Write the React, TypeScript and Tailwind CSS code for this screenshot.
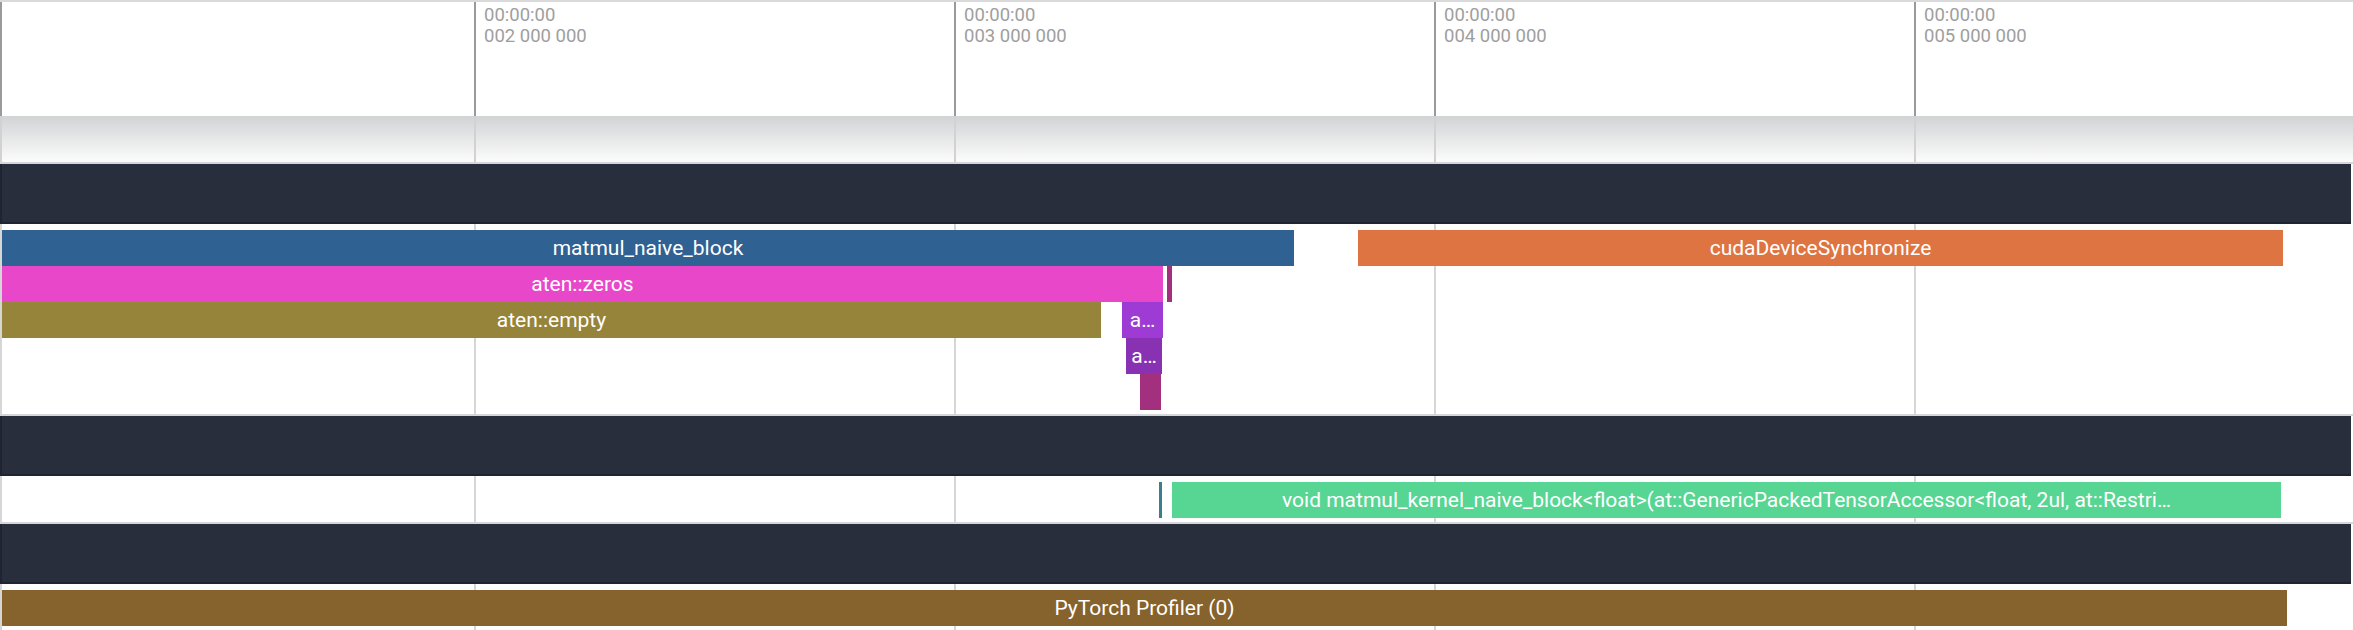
import React from "react";

type Bar = { l: number; r: number; color: string; text?: string };

const TICKS = [0, 474, 954, 1434, 1914];
const LABELS = [
  { x: 474, a: "00:00:00", b: "002 000 000" },
  { x: 954, a: "00:00:00", b: "003 000 000" },
  { x: 1434, a: "00:00:00", b: "004 000 000" },
  { x: 1914, a: "00:00:00", b: "005 000 000" },
];

const TRACK1: Bar[][] = [
  [
    { l: 2, r: 1294, color: "#2f6192", text: "matmul_naive_block" },
    { l: 1358, r: 2283, color: "#dd7441", text: "cudaDeviceSynchronize" },
  ],
  [
    { l: 2, r: 1163, color: "#e747c8", text: "aten::zeros" },
    { l: 1167, r: 1172, color: "#a2307f" },
  ],
  [
    { l: 2, r: 1101, color: "#96843a", text: "aten::empty" },
    { l: 1122, r: 1163, color: "#9d3bd4", text: "a…" },
  ],
  [{ l: 1126, r: 1162, color: "#8832b3", text: "a…" }],
  [{ l: 1140, r: 1161, color: "#a2307f" }],
];

const TRACK2: Bar[][] = [
  [
    { l: 1159, r: 1162, color: "#3c7f8c" },
    {
      l: 1172,
      r: 2281,
      color: "#57d593",
      text: "void matmul_kernel_naive_block<float>(at::GenericPackedTensorAccessor<float, 2ul, at::Restri…",
    },
  ],
];

const TRACK3: Bar[][] = [
  [{ l: 2, r: 2287, color: "#86622d", text: "PyTorch Profiler (0)" }],
];

function GridLines({ color }: { color: string }) {
  return (
    <>
      {TICKS.map((x) => (
        <div
          key={x}
          className="absolute top-0 bottom-0 w-[2px]"
          style={{ left: x, backgroundColor: color }}
        />
      ))}
    </>
  );
}

function Row({ bars }: { bars: Bar[] }) {
  return (
    <div className="relative h-[36px]">
      {bars.map((b, i) => (
        <div
          key={i}
          className="absolute top-0 h-[36px] flex items-center justify-center overflow-hidden whitespace-nowrap text-white text-[21px] leading-[36px]"
          style={{ left: b.l, width: b.r - b.l, backgroundColor: b.color }}
        >
          {b.text}
        </div>
      ))}
    </div>
  );
}

function Track({ rows, h }: { rows: Bar[][]; h: string }) {
  return (
    <div className={`relative bg-white ${h}`}>
      <GridLines color="#d6d6d6" />
      <div className="relative flex flex-col pt-[6px] pb-[4px]">
        {rows.map((r, i) => (
          <Row key={i} bars={r} />
        ))}
      </div>
    </div>
  );
}

function DarkBand() {
  return (
    <>
      <div className="h-[2px] bg-[#d5d6d9]" />
      <div className="h-[60px] mr-[2px] bg-[#282e3b] border-b-2 border-l-2 border-[#1f2430]" />
    </>
  );
}

export default function App() {
  return (
    <div
      className="w-[2353px] h-[630px] overflow-hidden bg-white flex flex-col"
      style={{ fontFamily: "Roboto, 'Liberation Sans', sans-serif" }}
    >
      <div className="h-[2px] bg-[#dadada]" />
      <div className="relative h-[114px] bg-white">
        <GridLines color="#9a9a9a" />
        {LABELS.map((lb) => (
          <div
            key={lb.x}
            className="absolute top-[3px] text-[18.5px] leading-[21px] text-[#9e9e9e]"
            style={{ left: lb.x + 10 }}
          >
            <div>{lb.a}</div>
            <div>{lb.b}</div>
          </div>
        ))}
      </div>
      <div className="relative h-[46px] bg-linear-to-b from-[#d2d3d5] to-[#fcfcfc]">
        <GridLines color="#d2d2d2" />
      </div>
      <DarkBand />
      <Track rows={TRACK1} h="h-[190px]" />
      <DarkBand />
      <Track rows={TRACK2} h="h-[46px]" />
      <DarkBand />
      <Track rows={TRACK3} h="h-[46px]" />
    </div>
  );
}
